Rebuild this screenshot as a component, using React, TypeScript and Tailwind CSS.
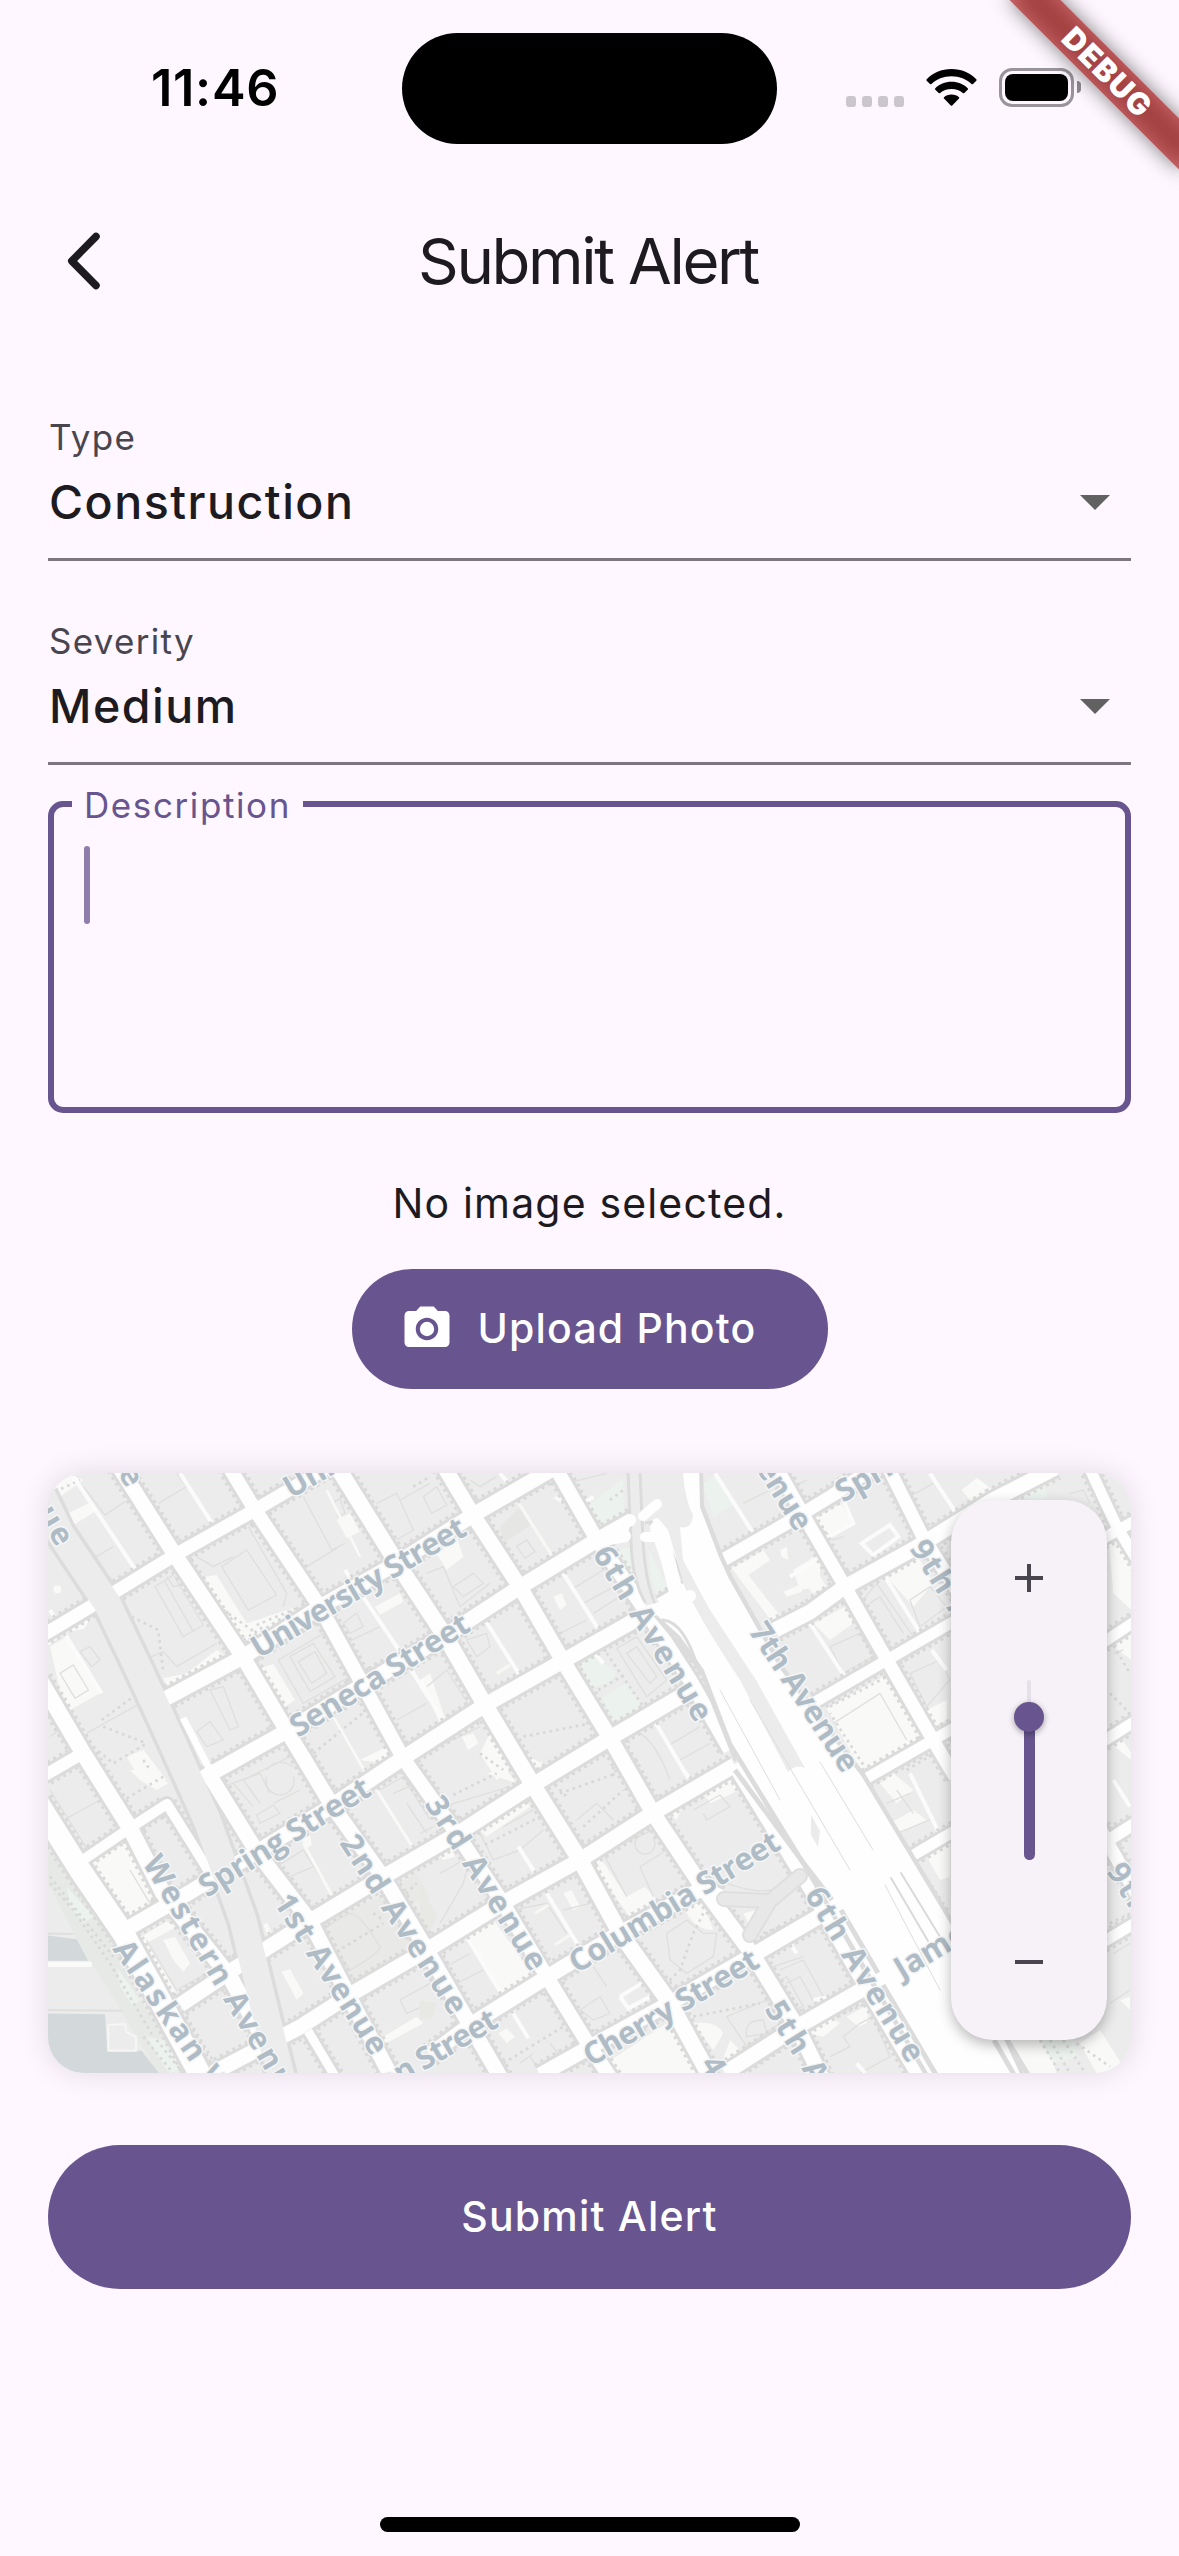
import type { ReactNode } from "react";

type Road = { d: string; w: number };

/* Streets that run up to the right, then avenues that run down to the right. */
const roads: Road[] = [
  { w: 13, d: "M40 1637L110 1595L175 1555L255 1510L335 1463" },
  { w: 15, d: "M163 1700L243 1657L320 1607L397 1563L473 1515L556 1467" },
  { w: 15, d: "M205 1777L287 1731L363 1685L445 1636L520 1587L597 1540L657 1506" },
  { w: 12, d: "M40 1778L83 1753" },
  { w: 10, d: "M80 1862L130 1828L167 1804L212 1876" },
  { w: 15, d: "M120 1933L180 1898L257 1852L327 1809L403 1758L485 1705L563 1661L637 1619L690 1588" },
  { w: 15, d: "M180 2005L237 1967L310 1921L383 1877L457 1834L533 1785L610 1738L700 1685" },
  { w: 15, d: "M213 2073L300 2027L353 1993L427 1950L503 1903L580 1860L653 1813L735 1765" },
  { w: 15, d: "M430 2055L470 2025L547 1977L620 1933L703 1888L720 1897" },
  { w: 15, d: "M540 2075L590 2047L670 2003L753 1955L830 1910" },
  { w: 15, d: "M725 2073L797 2027L870 1985" },
  { w: 13, d: "M723 1560L787 1523L833 1495L870 1470" },
  { w: 15, d: "M775 1630L810 1612L843 1588L917 1547L993 1500L1055 1468" },
  { w: 11, d: "M815 1702L887 1660L951 1623L1140 1518" },
  { w: 11, d: "M860 1782L933 1740L1107 1640L1140 1618" },
  { w: 11, d: "M905 1860L951 1833L1107 1739L1140 1718" },
  { w: 12, d: "M1090 1852L1140 1820" },
  { w: 11, d: "M1090 1950L1140 1920" },
  { w: 15, d: "M118 1465L175 1555L243 1657L287 1731L333 1807L383 1877L427 1950L470 2025L502 2080" },
  { w: 15, d: "M205 1768L257 1852L310 1921L347 1993L392 2078" },
  { w: 14, d: "M228 1465L255 1510L320 1607L363 1685L403 1758L457 1834L503 1903L547 1977L590 2047L612 2080" },
  { w: 16, d: "M336 1465L397 1563L445 1636L485 1705L533 1785L580 1860L620 1933L670 2003L712 2080" },
  { w: 15, d: "M443 1465L473 1515L520 1587L563 1661L610 1738L653 1813L703 1888L753 1955L797 2027L823 2080" },
  { w: 14, d: "M554 1465L597 1540L647 1613L690 1680L730 1750" },
  { w: 16, d: "M40 1680L83 1753L130 1828L163 1893L230 1977L285 2078" },
  { w: 22, d: "M38 1803L80 1870L123 1933L157 1995L203 2080" },
  { w: 13, d: "M778 1470L812 1530L847 1590L887 1660L933 1740L955 1777" },
  { w: 13, d: "M887 1465L923 1537L980 1627L1040 1725L1095 1820L1140 1900" },
  { w: 11, d: "M1088 1465L1117 1527L1140 1565" },
  { w: 12, d: "M733 1765L773 1830L810 1890L855 1970L920 2080" },
  { w: 9, d: "M308 2031L336 2078" },
];

type StreetLabel = { t: string; x: number; y: number; a: number; len: number; end?: boolean };

const labels: StreetLabel[] = [
  { t: "University Street", x: 259, y: 1659, a: -30.8, len: 244 },
  { t: "Seneca Street", x: 298, y: 1738, a: -31.8, len: 205 },
  { t: "Spring Street", x: 207, y: 1898, a: -32, len: 196 },
  { t: "Columbia Street", x: 577, y: 1974, a: -31.5, len: 241 },
  { t: "Cherry Street", x: 591, y: 2067, a: -30.6, len: 198 },
  { t: "Marion Street", x: 500, y: 2026, a: -30.6, len: 200, end: true },
  { t: "Union Street", x: 291, y: 1499, a: -30, len: 192 },
  { t: "Spring Street", x: 843, y: 1503, a: -30, len: 200 },
  { t: "James Street", x: 902, y: 1980, a: -31, len: 200 },
  { t: "6th Avenue", x: 592, y: 1554, a: 58.6, len: 199 },
  { t: "7th Avenue", x: 748, y: 1631, a: 56.5, len: 172 },
  { t: "8th Avenue", x: 796, y: 1533, a: 58, len: 175, end: true },
  { t: "6th Avenue", x: 804, y: 1895, a: 58.5, len: 199 },
  { t: "5th Avenue", x: 764, y: 2009, a: 58, len: 199 },
  { t: "4th Avenue", x: 700, y: 2064, a: 58, len: 199 },
  { t: "3rd Avenue", x: 424, y: 1804, a: 57.7, len: 200 },
  { t: "2nd Avenue", x: 339, y: 1843, a: 57.2, len: 207 },
  { t: "1st Avenue", x: 273, y: 1902, a: 57.5, len: 184 },
  { t: "Western Avenue", x: 142, y: 1863, a: 59.3, len: 287 },
  { t: "Alaskan Way", x: 112, y: 1949, a: 55.5, len: 224 },
  { t: "9th Avenue", x: 909, y: 1548, a: 58, len: 199 },
  { t: "9th Avenue", x: 1106, y: 1871, a: 58, len: 199 },
  { t: "Post Avenue", x: 127, y: 1489, a: 59, len: 200, end: true },
  { t: "Western Avenue", x: 57, y: 1548, a: 59, len: 284, end: true },
];

/* Each tile is drawn on its own 1200-unit grid, three units to the pixel. */
function Tile({ x, y, children }: { x: number; y: number; children: ReactNode }) {
  return <g transform={`translate(${x} ${y}) scale(0.33333)`}>{children}</g>;
}

const LOT = "#f9f9f7";
const PARK = "#ecf2ed";
const OUTLINE = "#dfdfde";

function CityMap() {
  return (
    <svg viewBox="48 1473 1083 600" className="block h-full w-full" aria-label="Map">
      <rect x="48" y="1473" width="1083" height="600" fill="#ececec" />

      <Tile x={30} y={1460}>
        <path fill={LOT} d="M525 350L560 345L600 410L650 490L800 440L815 455L650 550L560 430ZM400 655L470 640L560 570L590 590L420 690ZM690 625L730 612L795 720L760 745ZM920 180L960 160L990 215L950 235ZM60 90L120 45L160 60L90 110ZM115 160L185 125L195 155L130 195ZM60 560L110 530L210 700L120 750L90 690ZM290 890L340 870L410 960L330 960ZM990 900L1090 850L1060 910ZM1035 440L1110 400L1120 425L1050 465Z" />
        <g fill="none" stroke={OUTLINE} strokeWidth="4">
          <path d="M385 130L470 80L440 40M160 80L225 165L285 125M190 295L250 260M575 320L650 270L740 405L655 450ZM500 290L550 320L610 290M655 200L770 400L760 440M375 380L460 530L520 495L430 345ZM405 365L490 515M410 350L430 380L450 375M365 590L400 575L440 620L560 550M780 590L850 550L915 650L840 695ZM805 605L855 575L890 640L845 670ZM745 600L820 730L960 650L880 520ZM820 110L905 270L945 250M830 320L920 265M905 130L930 115L945 160L920 170M1040 130L1100 100L1150 210L1100 240M1110 120L1200 70M940 490L980 460L1000 500L960 520ZM955 545L1050 500M150 575L180 560L210 600L185 620ZM540 690L580 680L625 800L600 810ZM500 815L540 785L580 840L530 860ZM640 960L780 890M710 930Q740 890 790 920M1100 780L1190 730M170 820L330 730M60 500L160 430M60 830L100 800M90 640L130 615L175 690L135 715Z" />
          <path stroke="#d8d8d8" strokeWidth="8" strokeDasharray="8 12" d="M305 470L385 510L400 640M850 880L1010 750M580 450L680 520M680 495L810 440M215 780L310 710M220 800L350 850M640 540L700 500M75 95L150 60M190 860L250 910L350 850M340 900L380 960M1150 80L1200 50" />
        </g>
        <path fill="none" stroke="#fbfbfb" strokeWidth="12" d="M130 50L330 350M450 40L545 188M60 450L215 700M945 330L1100 560L1200 720M40 560L80 530M110 510L160 500L170 480" />
        <path fill="none" stroke="#f9f9f7" strokeWidth="8" d="M910 770L1005 935M890 90L990 290" />
        <circle cx="82" cy="388" r="12" fill={LOT} />
      </Tile>

      <Tile x={30} y={1770}>
        <path fill="#e6e9e6" d="M40 220L110 310L250 520L330 690L440 850L480 920L390 920L230 650L140 510L40 310Z" />
        <path fill={PARK} d="M110 350L190 440L160 460L120 410ZM260 590L330 690L310 710L270 650ZM350 800L400 810L450 880L440 920L410 900Z" />
        <path fill="#e9e9e7" d="M850 480L940 430L1120 350L1200 480L1200 560L960 640L900 570ZM1090 350L1160 310L1200 380L1130 410Z" />
        <path fill="#d3d8db" d="M40 495L140 508L175 572L40 572ZM40 730L225 733L232 840L335 842L395 920L40 920Z" />
        <path fill="none" stroke="#fbfbf9" strokeWidth="16" d="M40 583L185 583" />
        <path fill="none" stroke={OUTLINE} strokeWidth="6" d="M40 490L130 492M40 720L280 722" />
        <path fill="#ececec" stroke="#f6f6f5" strokeWidth="6" d="M235 765L285 762L290 787L318 800V842H235Z" />
        <path fill={LOT} d="M185 280L295 212L385 390L275 462L215 350ZM300 0L370 0L415 40L380 60L330 30ZM325 505L410 455L440 470L350 520L440 670L420 680ZM400 510L435 500L480 580L460 605L430 570ZM755 605L780 598L820 670L800 690ZM700 465L712 458L725 490L712 496ZM1060 800L1160 740L1180 760L1050 830ZM815 210L840 195L845 225L830 235Z" />
        <g fill="none" stroke={OUTLINE} strokeWidth="4">
          <path d="M60 60L170 235L285 180L190 20M110 145L210 90M580 50L690 10L720 70M610 40L670 110M640 30L690 100M680 135L730 105L750 130L690 160ZM730 100L810 60M710 20A42 42 0 1 0 790 20M350 510L440 660L530 610M885 500Q870 470 960 430Q990 430 1050 530Q1050 550 960 600ZM740 290L820 240L910 380M755 330L850 290M1050 60L1120 20L1200 150M1090 70L1160 40M1130 100L1190 190M1110 690L1200 640M1110 690L1130 730L1200 700M300 300L360 400" />
          <path stroke="#d8d8d8" strokeWidth="8" strokeDasharray="8 12" d="M60 340L130 420L240 580L370 800M920 545L1060 460M1030 430L1060 450M340 800L430 910M380 810L460 910M420 820L480 910M470 740L560 890M290 85L400 20M60 320L250 560M1100 400L1160 340" />
        </g>
        <path fill="none" stroke="#f9f9f7" strokeWidth="9" d="M820 220L905 375M1040 60L1150 235M215 285L290 430M250 270L330 410" />
      </Tile>

      <Tile x={420} y={1460}>
        <path fill={PARK} d="M475 610L520 590L590 635L570 670L515 680ZM545 715L620 670L665 740L580 785ZM500 140L610 55L612 160L540 195ZM848 72L885 48L945 130L880 172ZM685 265L745 385L710 402L685 330ZM590 270L635 260L645 330L650 400L600 330Z" />
        <path fill="#e6e7e4" d="M240 200L300 140L340 190L250 250Z" />
        <path fill={LOT} d="M400 410L425 400L440 435L420 450ZM400 115L420 100L425 130ZM40 265L110 230L130 290L80 330ZM935 325L1030 270L1050 300L985 345L1090 480L1060 490ZM0 660L30 640L80 790L60 790ZM125 830L160 820L175 850L145 870ZM180 880L210 820L270 930L230 960ZM1120 330L1200 280V380L1140 390ZM1090 395L1150 370L1145 395L1100 410ZM320 880L345 900L370 910L350 930Z" />
        <g fill="none" stroke={OUTLINE} strokeWidth="4">
          <path d="M10 110L50 80L80 135L35 160ZM290 260L320 240L345 275L315 295ZM460 385L550 330M490 430L600 370M520 460L600 410M420 520L500 480M590 565L650 530L740 660L680 710ZM620 580L650 560L710 650L690 670ZM100 380L160 340L190 370L130 410ZM20 340L70 320L120 440L210 370M20 680L80 630L150 740L80 780M630 850Q600 800 660 820Q710 850 750 960M740 860L840 800M780 900L870 850M10 880L180 800M970 130L1050 90M1120 80L1160 60M440 70L560 40M140 540L200 520L210 560L170 590ZM150 60L180 80L230 50" />
          <path stroke="#d8d8d8" strokeWidth="8" strokeDasharray="8 12" d="M310 830L510 790M535 690L620 640M560 580L670 740M180 880L250 930M215 840L270 930M570 120L610 90M650 900L640 950M580 900L580 960" />
        </g>
        <path fill="none" stroke="#fbfbfb" strokeWidth="12" d="M430 340L532 503M200 488L302 650M0 660L75 795M705 785L805 955M885 40L1000 220M240 40L265 70M515 570L550 610M480 140L520 110" />
        <path fill="none" stroke="#f7f7f4" strokeWidth="10" d="M290 120L398 290M230 640L270 615" />
      </Tile>

      <Tile x={420} y={1770}>
        <path fill={LOT} d="M145 500L225 455L345 625L255 690ZM550 885L740 760L800 830L850 920H560ZM510 275L540 262L620 380L675 350L720 400L630 442ZM430 370L455 360L480 410L460 420ZM235 790L260 775L285 800L260 820ZM820 760Q890 750 910 790L880 840ZM930 810L960 840L940 870L905 880ZM850 70L940 25L960 60L870 100ZM800 420L840 380L880 480Q830 480 800 430ZM970 430L1010 420L1000 450L985 460ZM200 10L260 0L290 40ZM50 250L90 230L105 260L70 270ZM1060 640L1150 750L1140 760ZM750 130L785 115L770 150ZM180 180L320 95L330 110L200 200Z" />
        <path fill="#e8e8e5" d="M0 340L50 440L20 500L0 500ZM0 690L50 700L40 740L0 750Z" />
        <g fill="none" stroke={OUTLINE} strokeWidth="4">
          <path d="M60 310L150 260L130 340L60 460M180 190L220 270L300 240L370 180M250 170L340 120M60 600L150 550M110 640L190 600M650 205A30 30 0 1 0 700 205A30 30 0 1 0 650 205M610 220L720 170L740 240L660 290L700 380M550 250L620 380M740 490L800 450L850 490L890 490L880 560L800 610L750 570ZM820 120L900 75L930 110L860 150L850 130M520 590L560 650M480 720L540 680L570 730L520 750ZM430 420L510 400M920 340Q1090 400 1110 300M920 740L1040 690L1080 760L980 830ZM980 800Q970 750 1030 750L1040 790ZM1080 630L1100 620L1150 710L1120 720ZM300 880L340 850M330 860L360 900M390 820L430 870M370 40L460 0M470 150L530 100L580 150M1030 600L1150 560M70 110L270 50M280 420L380 400L440 490M0 190L40 170" />
          <path stroke="#d8d8d8" strokeWidth="8" strokeDasharray="8 12" d="M195 225L360 140M100 75L230 10M490 170L610 60M420 70L590 10M850 430L820 490L780 600L740 640M820 740L1020 700M250 880L430 770M390 30L440 80M950 480L1000 500M1030 490L1080 470M1000 890L1080 840" />
        </g>
        <path fill="none" stroke="#fbfbfb" strokeWidth="12" d="M295 230L342 304M380 370L477 530M140 500L325 805M600 680L665 640M600 680L625 715L690 680M790 0L805 20M1000 0L1130 230M1110 520L1130 550" />
        <path fill="none" stroke="#f7f7f4" strokeWidth="9" d="M345 430L385 405M405 525L450 495" />
      </Tile>

      <Tile x={780} y={1460}>
        <path fill={LOT} d="M95 180L185 130L215 185L125 240ZM100 490L195 440L220 490L150 540ZM140 745L325 640L435 830L250 945ZM320 350L415 290L460 370L400 440ZM545 90L590 55L620 100L570 120ZM985 230L1010 225L1055 300V450L1000 400ZM40 340L90 300L140 380L100 400ZM0 270L20 260L25 300L5 290ZM990 850L1020 830L1055 880V900ZM400 660L440 750L500 720V780L460 800ZM1000 560L1055 500V600Z" />
        <path fill={PARK} d="M700 110L790 75L805 110L770 125Z" />
        <g fill="none" stroke={OUTLINE} strokeWidth="4">
          <path d="M370 120L460 70M150 560L240 520L280 590L190 640ZM240 430L290 370L400 530L330 570ZM270 430L300 410L370 520M390 420L450 380L500 440L420 500ZM390 640L480 600L510 660L440 740ZM160 790L300 700L380 840M120 200L160 240L190 230M870 100L910 90L930 130M1000 580L1030 570" />
          <path stroke="#d8d8d8" strokeWidth="8" strokeDasharray="8 12" d="M150 740L320 650L430 830L260 930L150 760M360 610L500 530M220 470L300 590M360 620L460 800M380 930L480 870M990 540L1050 640M990 700L1050 760" />
        </g>
        <path fill="none" stroke="#fbfbfb" strokeWidth="12" d="M450 40L530 162M315 350L422 522M90 490L202 662M245 250L330 195L355 230L280 285ZM190 120L220 190L120 245M455 570L500 630M30 350L110 300M590 60L640 100" />
      </Tile>

      <Tile x={780} y={1770}>
        <path fill={LOT} d="M300 40L340 10L400 60L350 100ZM330 160L400 120L440 150L350 190ZM80 790L150 740L180 760L130 800ZM200 740L270 700L260 760L235 770ZM640 810L800 810L830 910H700ZM900 820L960 780L1030 890L950 910ZM1020 690L1050 680V720ZM440 260L510 220V320L480 330Z" />
        <path fill={PARK} d="M780 810L880 800L890 860L820 880Z" />
        <g fill="none" stroke={OUTLINE} strokeWidth="4">
          <path d="M150 860L210 830L190 800L240 760L280 740L330 860L240 909M0 600L70 570L130 680M20 640L60 620L110 710M350 60L400 130M320 100L390 70M350 190L450 150M990 220L1050 190M1000 550L1050 520M990 700L1050 660" />
          <path stroke="#d8d8d8" strokeWidth="8" strokeDasharray="8 12" d="M170 740L280 690M380 240L470 190M410 280L510 430M780 810L840 909M810 810L870 909M850 810L910 900M890 820L990 890M270 50L370 220M990 460L1050 430" />
        </g>
        <path fill="none" stroke="#fbfbfb" strokeWidth="12" d="M390 10L480 195M230 880L255 909M100 690L150 680M1000 30L1050 110" />
      </Tile>

      <g fill="none" stroke="#d9d9d8" strokeDasharray="3 4">
        {roads.map((r, i) => (
          <path key={i} d={r.d} strokeWidth={r.w + 11} />
        ))}
      </g>

      <g fill="none" strokeLinejoin="round">
        {roads.map((r, i) => (
          <path key={i} d={r.d} stroke="#dcdcdc" strokeWidth={r.w + 6} />
        ))}
        <path stroke="#dcdcdc" strokeWidth="34" d="M42 1495L60 1533L107 1603L140 1672L170 1737L207 1820L243 1920L263 2003L282 2080" />
        {roads.map((r, i) => (
          <path key={i} d={r.d} stroke="#fefefe" strokeWidth={r.w} />
        ))}
        <path stroke="#ececec" strokeWidth="27" d="M42 1495L60 1533L107 1603L140 1672L170 1737L207 1820L243 1920L263 2003L282 2080" />
        <path stroke="#fefefe" strokeWidth="7" d="M183 1718L212 1774L240 1825" />
      </g>

      {/* Freeway corridor */}
      <path fill="#dcdcdc" d="M683 1465H703L704 1505L723 1555L732 1575L784 1667L866 1775L955 1923L1027 2080H928L800 1862L728 1745L700 1672L650 1612L690 1597L660 1535L640 1512L668 1490Z" />
      <path fill="#fefefe" d="M683 1465H699L700 1507L719 1557L728 1577L780 1669L862 1777L951 1925L1023 2080H932L804 1860L732 1743L704 1670L680 1636L650 1609L694 1594L663 1533L645 1512L670 1490Z" />
      <path fill="#ececec" d="M627 1473H683Q685 1500 693 1515Q692 1530 680 1527L683 1560L710 1610L756 1680L805 1768Q795 1764 788 1772L740 1680Q700 1620 684 1585L668 1530L658 1518L645 1522L652 1590L660 1604L646 1606Q630 1570 631 1540Z" />
      <g fill="none" strokeLinecap="round">
        <path stroke="#dcdcdc" strokeWidth="3" d="M628 1473L631 1540Q632 1580 645 1602M640 1473L643 1540Q645 1580 655 1604M663 1620Q685 1622 699 1672M706 1687L735 1760" />
        <path stroke="#fefefe" strokeWidth="12" d="M597 1540L630 1520M604 1540L625 1536" />
        <path stroke="#fefefe" strokeWidth="10" d="M643 1516L657 1504M645 1537H655" />
        <path stroke="#fefefe" strokeWidth="12" d="M650 1611Q672 1605 690 1596" />
        <path stroke="#fefefe" strokeWidth="14" d="M657 1528L668 1560L676 1592" />
        <path stroke="#dedede" strokeWidth="1" d="M720 1690L780 1800M750 1700L850 1870M820 1762L873 1850M885 1885L940 1990" />
        <path stroke="#dadada" strokeWidth="2" d="M891 1878L928 1941M901 1873L945 1945" />
        <path stroke="#dfdfdf" strokeWidth="16" d="M724 1899L770 1901L800 1876M770 1901L750 1935" />
        <path stroke="#e8e8e8" strokeWidth="12" d="M724 1899L770 1901L800 1876M770 1901L750 1935" />
        <path stroke="#dcdcdc" strokeWidth="5" strokeLinecap="butt" d="M735 1770L805 1865L832 1900M841 1910L878 1973M883 1985L938 2078M994 2040L1016 2078M1006 2038L1030 2078" />
      </g>
      <path fill="#ebebeb" d="M811 1815L820 1831L818 1847L811 1835Z" />

      <g
        fontFamily="'Open Sans', 'Noto Sans', sans-serif"
        fontWeight="700"
        fontSize="31"
        fill="#b0bcc5"
        stroke="#f4f6f7"
        strokeWidth="3"
        strokeLinejoin="round"
        paintOrder="stroke"
      >
        {labels.map((l, i) => (
          <text
            key={i}
            transform={`translate(${l.x} ${l.y}) rotate(${l.a})`}
            textLength={l.len}
            textAnchor={l.end ? "end" : "start"}
          >
            {l.t}
          </text>
        ))}
      </g>
    </svg>
  );
}

function StatusBar() {
  return (
    <div className="flex h-[177px] pl-[151px] text-black">
      <div className="mt-[58px] h-[60px] w-[251px] text-[50.5px] leading-[60px] font-semibold tracking-[0.7px]">11:46</div>
      <div className="mt-[33px] h-[111px] w-[375px] rounded-full bg-black" />
      <div className="mt-[96px] ml-[69px] flex gap-[6px]">
        <span className="h-[11px] w-[10px] rounded-[3px] bg-[#cbc5cd]" />
        <span className="h-[11px] w-[10px] rounded-[3px] bg-[#cbc5cd]" />
        <span className="h-[11px] w-[10px] rounded-[3px] bg-[#cbc5cd]" />
        <span className="h-[11px] w-[10px] rounded-[3px] bg-[#cbc5cd]" />
      </div>
      <svg viewBox="0 0 51 38" className="mt-[69px] ml-[22px] h-[38px] w-[51px]">
        <path d="M25.5 0C35.5 0 44.4 4 50.3 10.3Q51 11.1 50.3 11.8L47 15Q46.3 15.7 45.5 15C40.5 10 33.5 7.2 25.5 7.2S10.5 10 5.5 15Q4.7 15.7 4 15L.7 11.8Q0 11.1 .7 10.3C6.6 4 15.5 0 25.5 0Z" />
        <path d="M25.5 12.8C32 12.8 37.8 15.3 41.7 19.3Q42.4 20 41.7 20.7L38.3 24Q37.5 24.7 36.8 24C34 21.5 30 20 25.5 20S17 21.5 14.2 24Q13.5 24.7 12.7 24L9.3 20.7Q8.6 20 9.3 19.3C13.2 15.3 19 12.8 25.5 12.8Z" />
        <path d="M25.5 25.5C28.6 25.5 31.2 26.5 33 28.2Q33.6 28.9 33 29.6L26.2 36.5Q25.5 37.2 24.8 36.5L18 29.6Q17.4 28.9 18 28.2C19.8 26.5 22.4 25.5 25.5 25.5Z" />
      </svg>
      <div className="mt-[68px] ml-[22px] h-[39px] w-[75px] rounded-[13px] border-[3px] border-[#99949b] p-[3px]">
        <div className="h-full w-full rounded-[8px] bg-black" />
      </div>
      <div className="mt-[81px] ml-[3px] h-[12px] w-[4px] rounded-r-full bg-[#8e8990]" />
    </div>
  );
}

function DebugBanner() {
  return (
    <div className="pointer-events-none absolute top-0 right-0 h-[260px] w-[260px] overflow-hidden">
      <div className="absolute top-[54px] left-[67.9px] h-[36px] w-[240px] rotate-45">
        <div className="absolute inset-0 bg-black/50 blur-[10px]" />
        <div className="absolute inset-0 flex items-center justify-center bg-[#b71c1c]/[.627] pl-[1px] text-[30.6px] leading-none font-black tracking-[1.2px] text-white">
          DEBUG
        </div>
      </div>
    </div>
  );
}

function SelectField({ label, value }: { label: string; value: string }) {
  return (
    <div className="flex h-[144px] flex-col border-b-[3px] border-[#7d757f]">
      <div className="h-[40px] pl-[1px] text-[35px] leading-[40px] tracking-[1.3px] text-[#49454f]">{label}</div>
      <div className="mt-[15px] flex h-[60px] items-center justify-between pr-[21px] pl-[1px]">
        <span className="text-[46.5px] leading-[60px] font-medium tracking-[1.5px] text-[#1d1b20]">{value}</span>
        <span className="h-0 w-0 border-x-[15px] border-t-[15px] border-x-transparent border-t-[#616161]" />
      </div>
    </div>
  );
}

function ZoomPanel() {
  return (
    <div className="absolute top-[27px] right-[24px] flex h-[540px] w-[156px] flex-col items-center rounded-[42px] bg-[#f7f1f8] pt-[64px] shadow-[0_5px_14px_rgba(0,0,0,0.28)]">
      <svg viewBox="0 0 28 28" className="h-[28px] w-[28px]" fill="#49454f">
        <path d="M12 0h4v12h12v4H16v12h-4V16H0v-4h12z" />
      </svg>
      <div className="mt-[88px] flex w-[30px] flex-col items-center">
        <div className="h-[23px] w-[4px] rounded-t-full bg-[#e6e0e9]" />
        <div className="z-10 -mt-px h-[30px] w-[30px] rounded-full bg-[#68548e] shadow-[0_2px_6px_rgba(0,0,0,0.35)]" />
        <div className="-mt-[2px] h-[130px] w-[11px] rounded-b-full bg-[#68548e]" />
      </div>
      <div className="mt-[100px] h-[4px] w-[28px] bg-[#49454f]" />
    </div>
  );
}

export default function App() {
  return (
    <div className="relative flex h-[2556px] w-[1179px] flex-col overflow-hidden bg-[#fef7ff] font-['Inter',sans-serif]">
      <StatusBar />

      <header className="relative flex h-[168px] items-center justify-center pr-[3px]">
        <svg
          viewBox="0 0 40 66"
          className="absolute top-[51px] left-[63px] h-[66px] w-[40px]"
          fill="none"
          stroke="#1d1b20"
          strokeWidth="7.5"
          strokeLinecap="round"
          strokeLinejoin="round"
        >
          <path d="M33 8.5L8.8 33L33 57.5" />
        </svg>
        <h1 className="text-[63.5px] leading-[80px] tracking-[-2.4px] text-[#1d1b20]">Submit Alert</h1>
      </header>

      <main className="flex flex-col items-stretch px-12 pt-[72px]">
        <SelectField label="Type" value="Construction" />
        <div className="h-[60px]" />
        <SelectField label="Severity" value="Medium" />

        <div className="relative mt-[36px] h-[312px] rounded-[15px] border-[6px] border-[#68548e] pt-[39px] pl-[30px]">
          <span className="absolute -top-[22px] left-[18px] h-[40px] w-[231px] bg-[#fef7ff] pl-[12px] text-[35px] leading-[40px] tracking-[1.6px] text-[#68548e]">
            Description
          </span>
          <div className="h-[78px] w-[6px] rounded-full bg-[#8f7eab]" />
        </div>

        <p className="mt-[60px] text-center text-[41px] leading-[60px] tracking-[1.16px] text-[#1d1b20]">No image selected.</p>

        <button className="mt-[36px] flex h-[120px] w-[476px] items-center gap-[24px] self-center rounded-full bg-[#68548e] pl-[48px] text-[41px] font-medium tracking-[1.18px] text-white">
          <svg viewBox="0 0 24 24" className="h-[54px] w-[54px]" fill="currentColor">
            <circle cx="12" cy="12" r="3.2" />
            <path d="M9 2L7.17 4H4c-1.1 0-2 .9-2 2v12c0 1.1.9 2 2 2h16c1.1 0 2-.9 2-2V6c0-1.1-.9-2-2-2h-3.170L15 2H9zm3 15c-2.760 0-5-2.240-5-5s2.240-5 5-5 5 2.240 5 5-2.240 5-5 5z" />
          </svg>
          Upload Photo
        </button>

        <div className="relative mt-[84px] h-[600px] rounded-[36px] shadow-[0_0_30px_rgba(0,0,0,0.12)]">
          <div className="h-full overflow-hidden rounded-[36px]">
            <CityMap />
          </div>
          <ZoomPanel />
        </div>

        <button className="mt-[72px] h-[144px] rounded-full bg-[#68548e] text-[41px] font-medium tracking-[1.2px] text-white">
          Submit Alert
        </button>
      </main>

      <div className="mt-auto mb-[24px] h-[15px] w-[420px] self-center rounded-full bg-black" />
      <DebugBanner />
    </div>
  );
}
